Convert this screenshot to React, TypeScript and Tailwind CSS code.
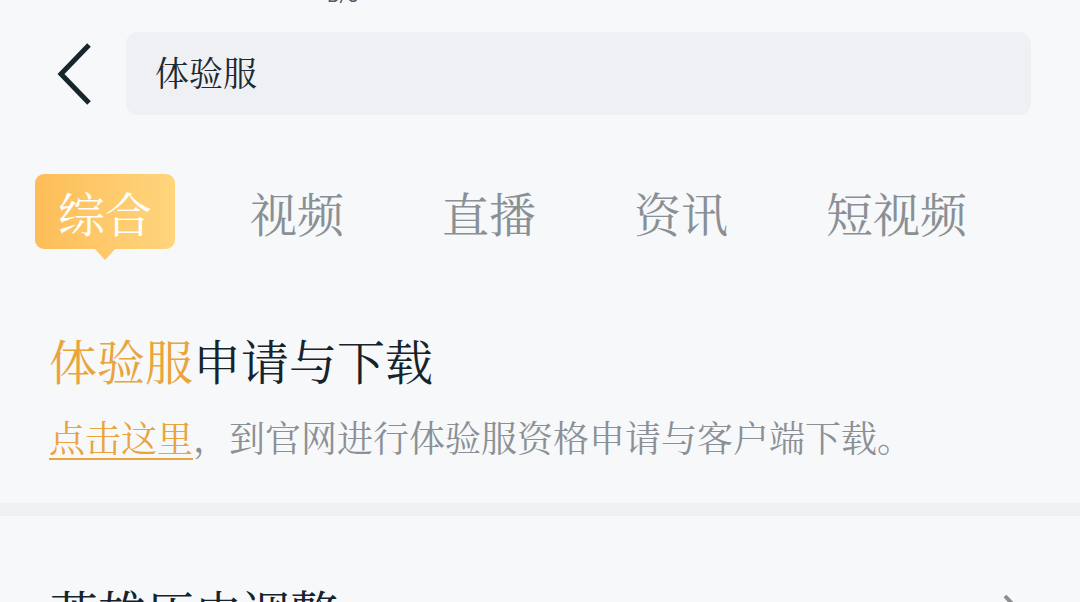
import React from 'react';

const tabs = ['综合', '视频', '直播', '资讯', '短视频', '图片'];

const App: React.FC = () => {
  return (
    <div
      className="w-[1080px] h-[602px] overflow-hidden bg-[#f7f8fa] flex flex-col"
      style={{ fontFamily: '"Noto Serif CJK SC", "Liberation Serif", "Noto Sans CJK SC", serif' }}
    >
      {/* status bar remnant */}
      <div className="shrink-0 h-[5px] overflow-hidden flex items-end">
        <span className="ml-[327px] text-[20px] leading-[20px] text-[#555b60] font-['Roboto',sans-serif]">B/s</span>
      </div>

      {/* search header */}
      <div className="shrink-0 mt-[27px] h-[83px] flex items-center">
        <button className="ml-[54px] w-[40px] h-[64px] flex items-center justify-center">
          <svg width="36" height="64" viewBox="0 0 36 64" fill="none">
            <path d="M33 3 L5 32 L33 61" stroke="#17252d" strokeWidth="5" strokeLinejoin="miter" />
          </svg>
        </button>
        <div className="ml-[32px] w-[905px] h-[83px] rounded-[12px] bg-[#eff0f4] flex items-center pl-[29px] pb-[4px]">
          <span className="text-[34px] text-[#1d2a30]">体验服</span>
        </div>
      </div>

      {/* tabs */}
      <div className="relative shrink-0 mt-[59px] h-[87px] flex items-start pl-[35px] gap-[52px] whitespace-nowrap">
        {tabs.map((t, i) =>
          i === 0 ? (
            <div key={t} className="relative">
              <div className="h-[75px] px-[23px] rounded-[9px] bg-gradient-to-r from-[#fdbd58] to-[#ffd57c] flex items-center">
                <span className="text-[47px] leading-none text-white">{t}</span>
              </div>
              <div className="absolute left-1/2 -translate-x-1/2 top-[74px] w-0 h-0 border-l-[11px] border-r-[11px] border-t-[12px] border-l-transparent border-r-transparent border-t-[#fec96b]" />
            </div>
          ) : (
            <div key={t} className="h-[75px] px-[23px] flex items-center">
              <span className="text-[47px] leading-none text-[#899095]">{t}</span>
            </div>
          )
        )}
        <div className="absolute right-0 top-0 w-[16px] h-[75px] bg-[#f7f8fa]" />
        <div className="absolute right-[16px] top-0 w-[6px] h-[75px] bg-gradient-to-r from-transparent to-[#f7f8fa]" />
      </div>

      {/* experience server section */}
      <div className="shrink-0 pl-[49px] mt-[70px]">
        <div className="text-[48px] leading-[58px] text-[#16232a]">
          <span className="text-[#e9a43c]">体验服</span>申请与下载
        </div>
        <div className="mt-[26px] text-[36px] leading-[44px] text-[#8a9095]">
          <span className="text-[#e9a43c] underline underline-offset-[6px] decoration-[2px]">点击这里</span>，到官网进行体验服资格申请与客户端下载。
        </div>
      </div>

      {/* divider */}
      <div className="shrink-0 mt-[44px] h-[13px] bg-[#eff0f4]" />

      {/* next item */}
      <div className="shrink-0 mt-[66px] pl-[50px] pr-[58px] flex items-start justify-between">
        <span className="text-[48px] leading-[58px] text-[#16232a]">英雄历史调整</span>
        <svg width="20" height="36" viewBox="0 0 20 36" fill="none" className="mt-[11px]">
          <path d="M3 3 L17 18 L3 33" stroke="#8a8f93" strokeWidth="4" />
        </svg>
      </div>
    </div>
  );
};

export default App;
